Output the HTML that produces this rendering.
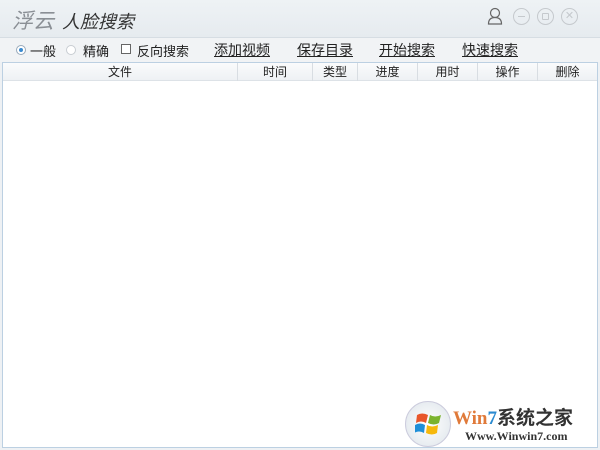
<!DOCTYPE html>
<html><head><meta charset="utf-8"><style>
*{margin:0;padding:0;box-sizing:border-box}
body{width:600px;height:450px;overflow:hidden;background:#eef1f4;font-family:"Liberation Sans","Noto Sans CJK SC",sans-serif;position:relative;font-size:13px;color:#222}
.title{position:absolute;left:0;top:0;width:600px;height:38px;background:linear-gradient(#eef2f5,#e6ebef);border-bottom:1px solid #d6dde3}
.t1{position:absolute;left:12px;top:5px;font-size:21px;font-style:italic;color:#8a8f95}
.t2{position:absolute;left:62px;top:8px;font-size:18px;font-style:italic;color:#333}
.bar{position:absolute;top:38px;left:0;width:600px;height:24px;background:#f1f3f5}
.bar span{position:absolute;top:3px;white-space:nowrap}
.u{text-decoration:underline;font-size:14px;top:2px!important}
.radio{position:absolute;width:10px;height:10px;border-radius:50%;border:1px solid #c8cdd2;background:#fff;top:45px}
.tbl{position:absolute;left:2px;top:62px;width:596px;height:386px;background:#fff;border:1px solid #bcd0e2}
.hd{position:absolute;left:0;top:0;width:594px;height:18px;background:linear-gradient(#fafbfc,#eef1f4);border-bottom:1px solid #dde2e7}
.hd div{position:absolute;top:0;height:18px;line-height:18px;text-align:center;font-size:12px;border-right:1px solid #d8dde2}
.ic{position:absolute;top:8px;width:17px;height:17px;border-radius:50%;border:1px solid #c5c9cd}
</style></head><body>
<div class="title"><span class="t1">浮云</span><span class="t2">人脸搜索</span>
<svg style="position:absolute;left:487px;top:7px" width="16" height="18"><circle cx="8" cy="6" r="4.5" fill="none" stroke="#666" stroke-width="1.2"/><path d="M1.5 17 Q1.5 10.5 8 10.5 Q14.5 10.5 14.5 17 Z" fill="none" stroke="#666" stroke-width="1.2"/></svg>
<div class="ic" style="left:513px"><div style="position:absolute;left:4px;top:7px;width:7px;height:1px;background:#c5c9cd"></div></div>
<div class="ic" style="left:537px"><div style="position:absolute;left:4px;top:4px;width:7px;height:7px;border:1px solid #c5c9cd;border-radius:1px"></div></div>
<div class="ic" style="left:561px;font-size:11px;line-height:15px;text-align:center;color:#c5c9cd">✕</div>
</div>
<div class="bar">
<span style="left:30px">一般</span><span style="left:83px">精确</span>
<span style="left:121px;top:6px;width:10px;height:10px;border:1px solid #666;background:#fff"></span>
<span style="left:137px">反向搜索</span>
<span class="u" style="left:214px">添加视频</span><span class="u" style="left:297px">保存目录</span>
<span class="u" style="left:379px">开始搜索</span><span class="u" style="left:462px">快速搜索</span>
</div>
<div class="radio" style="left:16px;border-color:#9ab"><div style="margin:2px;width:4px;height:4px;border-radius:50%;background:#3a8ad0"></div></div>
<div class="radio" style="left:66px"></div>
<div class="tbl"><div class="hd">
<div style="left:0;width:235px">文件</div><div style="left:235px;width:75px">时间</div>
<div style="left:310px;width:45px">类型</div><div style="left:355px;width:60px">进度</div>
<div style="left:415px;width:60px">用时</div><div style="left:475px;width:60px">操作</div>
<div style="left:535px;width:59px;border:none">删除</div></div>
<div style="position:absolute;left:402px;top:338px;width:46px;height:46px;border-radius:50%;background:radial-gradient(#fff,#dde4ea);border:1px solid #ccd"></div>
<svg style="position:absolute;left:412px;top:348px" width="28" height="26"><path d="M2 4 Q7 1 13 4 L11 12 Q6 9 1 12Z" fill="#e8562a"/><path d="M15 4 Q20 7 26 4 L24 12 Q19 15 13 12Z" fill="#7bb32e"/><path d="M0 14 Q5 11 10 14 L9 22 Q4 19 -1 22Z" fill="#1e8fd8"/><path d="M12 14 Q17 17 23 14 L22 22 Q17 25 11 22Z" fill="#f6b80c"/></svg>
<span style="position:absolute;left:450px;top:340px;font:bold 19px 'Liberation Serif',serif;color:#e07a3a">Win<span style="color:#2a8ad0">7</span><span style="color:#333;font-family:'Noto Sans CJK SC',sans-serif">系统之家</span></span>
<span style="position:absolute;left:462px;top:366px;font:bold 12px 'Liberation Serif',serif;color:#333">Www.Winwin7.com</span>
</div>
</body></html>
